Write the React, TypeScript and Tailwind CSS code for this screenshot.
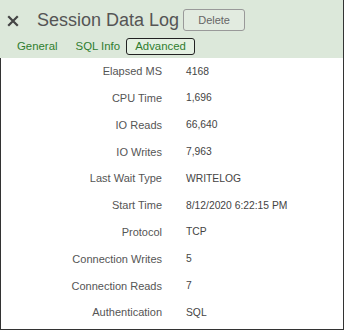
import React from "react";

const rows: [string, string][] = [
  ["Elapsed MS", "4168"],
  ["CPU Time", "1,696"],
  ["IO Reads", "66,640"],
  ["IO Writes", "7,963"],
  ["Last Wait Type", "WRITELOG"],
  ["Start Time", "8/12/2020 6:22:15 PM"],
  ["Protocol", "TCP"],
  ["Connection Writes", "5"],
  ["Connection Reads", "7"],
  ["Authentication", "SQL"],
];

export default function App() {
  return (
    <div
      className="w-[344px] h-[330px] bg-white border-r border-b border-[#333] flex flex-col overflow-hidden"
      style={{ fontFamily: '"Liberation Sans", Arial, sans-serif' }}
    >
      <div className="h-[58px] bg-[#dce8da] flex flex-col shrink-0">
        <div className="flex items-center h-[38px] pt-[2px]">
          <svg width="12" height="12" viewBox="0 0 12 12" className="ml-[7px] mt-[1px]">
            <path d="M2 2 L10 10 M10 2 L2 10" stroke="#444" strokeWidth="2.2" strokeLinecap="square" />
          </svg>
          <span className="ml-[18px] text-[18px] text-[#555] leading-none">Session Data Log</span>
          <button className="ml-[4px] w-[62px] h-[22px] border border-[#999] rounded-[3px] bg-[#e2ebe0] text-[11px] text-[#666]">
            Delete
          </button>
        </div>
        <div className="flex items-center h-[17px] text-[11.4px] text-[#2f7d2f]">
          <span className="ml-[17px]">General</span>
          <span className="ml-[18px]">SQL Info</span>
          <span className="ml-[6px] h-[17px] w-[69px] flex items-center justify-center border-[1.5px] border-[#222] rounded-[3px] bg-[#e4f0e2]">
            Advanced
          </span>
        </div>
      </div>
      <div className="flex-1 border-l border-[#333] flex flex-col">
        {rows.map(([k, v]) => (
          <div key={k} className="h-[26.8px] flex items-center">
            <span className="w-[161px] text-right text-[#555] text-[11px]">{k}</span>
            <span className="ml-[24px] text-[#444] text-[10.3px]">{v}</span>
          </div>
        ))}
      </div>
    </div>
  );
}
